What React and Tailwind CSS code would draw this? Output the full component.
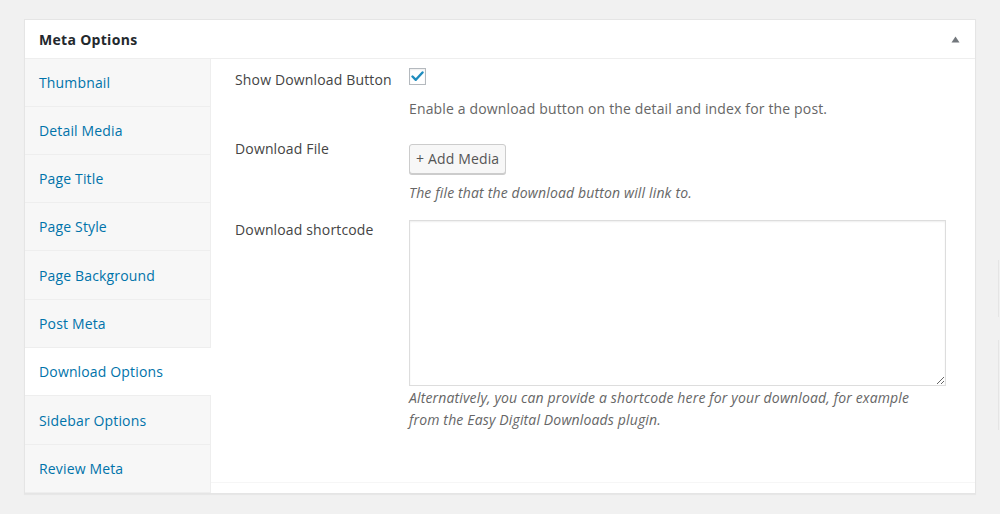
const tabs = [
  { label: "Thumbnail", h: "h-[48px]" },
  { label: "Detail Media", h: "h-[48px]" },
  { label: "Page Title", h: "h-[48px]" },
  { label: "Page Style", h: "h-[48px]" },
  { label: "Page Background", h: "h-[49px]" },
  { label: "Post Meta", h: "h-[48px]" },
  { label: "Download Options", h: "h-[48px]", active: true },
  { label: "Sidebar Options", h: "h-[49px]" },
  { label: "Review Meta", h: "h-[48px]" },
];

function Checkbox() {
  return (
    <span className="flex h-[17px] w-[17px] items-center justify-center border border-[#b4b9be] bg-white shadow-[inset_0_1px_2px_rgba(0,0,0,0.07)]">
      <svg width="13" height="11" viewBox="0 0 13 11" fill="none">
        <path d="M1.5 5.5 L4.8 8.8 L11.5 1.5" stroke="#1e8cbe" strokeWidth="2.4" strokeLinecap="round" strokeLinejoin="round" />
      </svg>
    </span>
  );
}

function App() {
  return (
    <div className="relative h-[514px] w-[1000px] overflow-hidden bg-[#f1f1f1] pt-[19px] pl-[24px] font-['Open_Sans','Liberation_Sans',sans-serif] text-[14px] tracking-[0.15px] text-[#444]">
      <div className="w-[952px] border border-[#e5e5e5] bg-white shadow-[0_1px_1px_rgba(0,0,0,0.04)]">
        <div className="flex h-[39px] items-center justify-between border-b border-[#eee] pl-[14px] pr-[15px]">
          <h2 className="text-[14px] font-bold tracking-[0.3px] text-[#23282d]">Meta Options</h2>
          <svg width="9" height="7" viewBox="0 0 9 7">
            <path d="M0.5 6.5 L4.5 0.5 L8.5 6.5 Z" fill="#72777c" />
          </svg>
        </div>
        <div className="flex">
          <ul className="w-[186px] shrink-0 bg-[#f7f7f7]">
            {tabs.map((t) => (
              <li
                key={t.label}
                className={`${t.h} box-border flex items-center border-b border-[#eee] pl-[14px] text-[#0073aa] ${
                  t.active ? "bg-white" : "border-r border-r-[#eee]"
                }`}
              >
                {t.label}
              </li>
            ))}
          </ul>
          <div className="flex-1">
            <div className="h-[424px] border-b border-[#f6f6f6] pl-[24px]">
              <div className="flex pt-[9px]">
                <div className="w-[174px] pt-[2px] leading-[20px]">Show Download Button</div>
                <div>
                  <Checkbox />
                  <p className="mt-[14px] leading-[20px] text-[#666]">Enable a download button on the detail and index for the post.</p>
                </div>
              </div>
              <div className="mt-[20px] flex">
                <div className="w-[174px] leading-[20px]">Download File</div>
                <div className="pt-[5px]">
                  <button className="h-[30px] rounded-[3px] border border-[#ccc] bg-[#f7f7f7] px-[6px] text-[14px] leading-[26px] tracking-[0.15px] text-[#555] shadow-[0_1px_0_#ccc]">
                    + Add Media
                  </button>
                  <p className="mt-[9px] leading-[20px] italic text-[#666]">The file that the download button will link to.</p>
                </div>
              </div>
              <div className="mt-[17px] flex">
                <div className="w-[174px] leading-[20px]">Download shortcode</div>
                <div>
                  <textarea className="block h-[166px] w-[537px] resize border border-[#ddd] bg-white shadow-[inset_0_1px_2px_rgba(0,0,0,0.07)] outline-none" />
                  <p className="mt-[1px] w-[520px] leading-[22px] italic text-[#666]">
                    Alternatively, you can provide a shortcode here for your download, for example from the Easy Digital Downloads plugin.
                  </p>
                </div>
              </div>
            </div>
          </div>
        </div>
      </div>
      <div className="absolute left-[998px] top-[260px] h-[57px] w-[2px] border-l border-[#e5e5e5]" />
      <div className="absolute left-[998px] top-[340px] h-[90px] w-[2px] border-l border-[#e5e5e5]" />
    </div>
  );
}

export default App;
